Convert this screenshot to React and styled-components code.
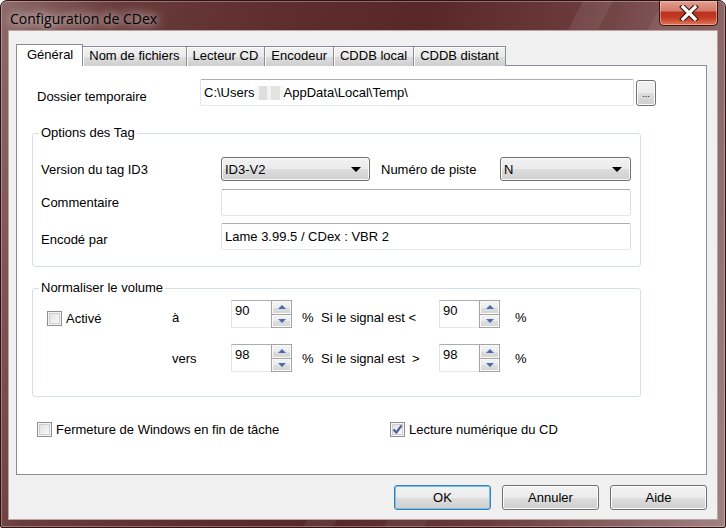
import React from 'react'
import styled, { createGlobalStyle, css } from 'styled-components'

const GlobalStyle = createGlobalStyle`
  html, body {
    margin: 0;
    padding: 0;
    background: #ffffff;
  }
  body {
    font-family: "Liberation Sans", Arial, sans-serif;
    font-size: 13px;
    color: #000;
  }
  * { box-sizing: border-box; }
`

const Window = styled.div`
  width: 726px;
  height: 528px;
  display: flex;
  flex-direction: column;
  border: 1px solid #2c1414;
  border-radius: 7px 7px 2px 2px;
  box-shadow: inset 0 0 0 1px rgba(255, 220, 220, 0.35);
  background:
    linear-gradient(118deg, transparent 0 58%, rgba(255,255,255,0.07) 58% 61%, transparent 61% 66%, rgba(255,255,255,0.06) 66% 70%, transparent 70%),
    linear-gradient(100deg, #8e6a6a 0%, #6a3c3c 14%, #5e2d2d 35%, #582828 52%, #6a3a3a 70%, #8a6464 88%, #a08282 100%);
  overflow: hidden;
`

const TitleBar = styled.div`
  height: 29px;
  display: flex;
  align-items: flex-start;
  justify-content: space-between;
  padding-left: 9px;
`

const Title = styled.div`
  font-family: "Open Sans", "Noto Sans", sans-serif;
  font-size: 14px;
  line-height: 20px;
  margin-top: 8px;
  color: #000;
  text-shadow: 0 0 8px rgba(255,255,255,0.9), 0 0 14px rgba(255,255,255,0.7);
`

const CloseButton = styled.div`
  width: 59px;
  height: 25px;
  margin-right: 7px;
  border: 1px solid #3b1410;
  border-top: none;
  border-radius: 0 0 5px 5px;
  background: linear-gradient(180deg, #e2a293 0%, #d57a68 40%, #b8321f 48%, #c43a23 70%, #e0785a 100%);
  box-shadow: inset 0 0 0 1px rgba(255,210,200,0.5);
  display: flex;
  align-items: center;
  justify-content: center;
`

const Client = styled.div`
  flex: 1;
  margin: 0 7px 7px 7px;
  background: #f0f0f0;
  border: 1px solid #b9a3a3;
  display: flex;
  flex-direction: column;
  padding: 13px 10px 0 7px;
`

const TabStrip = styled.div`
  display: flex;
  align-items: flex-end;
  height: 22px;
  margin-bottom: -1px;
  position: relative;
  z-index: 1;
`

const Tab = styled.div`
  height: 20px;
  padding: 0 6px;
  line-height: 18px;
  border: 1px solid #898c95;
  border-bottom: none;
  border-left-width: 0;
  background: linear-gradient(180deg, #f2f2f2 0%, #ebebeb 50%, #dddddd 51%, #cfcfcf 100%);
  box-shadow: inset 1px 1px 0 #fcfcfc;
  white-space: nowrap;
  ${p => p.$active && css`
    height: 22px;
    padding: 0 9px 0 10px;
    line-height: 20px;
    border-left-width: 1px;
    background: #ffffff;
    box-shadow: none;
  `}
`

const Panel = styled.div`
  flex: 1;
  background: #ffffff;
  border: 1px solid #898c95;
  padding-top: 13px;
`

const Row = styled.div`
  display: flex;
  align-items: center;
  margin-left: ${p => p.$indent || 0}px;
  margin-top: ${p => p.$top || 0}px;
`

const Label = styled.span`
  display: inline-block;
  width: ${p => p.$w ? p.$w + 'px' : 'auto'};
  margin-left: ${p => p.$ml || 0}px;
  white-space: pre;
  padding-top: ${p => p.$pt || 0}px;
`

const TextBox = styled.div`
  width: ${p => p.$w}px;
  height: ${p => p.$h || 27}px;
  border: 1px solid;
  border-color: #abadb3 #dbdfe6 #e3e9ef #e2e3ea;
  border-radius: 2px;
  background: #fff;
  padding: 0 3px;
  display: flex;
  align-items: center;
  white-space: nowrap;
`

const Blur = styled.span`
  display: inline-block;
  width: 29px;
  height: 14px;
  background: linear-gradient(90deg, #f6f6f6 0 14%, #dedede 14% 40%, #f3f3f3 40% 56%, #e3e3e3 56% 86%, #f6f6f6 86%);
`

const SmallButton = styled.div`
  width: 20px;
  height: 26px;
  margin-left: 2px;
  border: 1px solid #707070;
  border-radius: 3px;
  background: linear-gradient(180deg, #f2f2f2 0%, #ebebeb 50%, #dddddd 51%, #cfcfcf 100%);
  box-shadow: inset 0 0 0 1px #fcfcfc;
  font-size: 9px;
  display: flex;
  align-items: flex-end;
  justify-content: center;
  padding-bottom: 6px;
`

const Group = styled.fieldset`
  margin: ${p => p.$top}px 0 0 15px;
  width: 609px;
  border: 1px solid #d5dfe5;
  border-radius: 3px;
  padding: ${p => p.$pad};
  min-width: 0;
`

const Legend = styled.legend`
  padding: 0 2px;
  margin-left: -2px;
  line-height: 16px;
`

const Select = styled.div`
  width: ${p => p.$w}px;
  height: 24px;
  border: 1px solid #707070;
  border-radius: 3px;
  background: linear-gradient(180deg, #f2f2f2 0%, #ebebeb 50%, #dddddd 51%, #cfcfcf 100%);
  box-shadow: inset 0 0 0 1px #fbfbfb;
  display: flex;
  align-items: center;
  justify-content: space-between;
  padding: 0 8px 0 3px;
`

const Arrow = styled.span`
  width: 0;
  height: 0;
  border-left: 5px solid transparent;
  border-right: 5px solid transparent;
  border-top: 5px solid #000;
`

const SpinGrid = styled.div`
  display: grid;
  grid-template-columns: 125px 59px 61px 29px 118px 61px auto;
  grid-auto-rows: 28px;
  row-gap: 16px;
  align-items: center;
  margin-left: 6px;
`

const Spinner = styled.div`
  display: flex;
  width: 61px;
  height: 28px;
`

const SpinText = styled.div`
  flex: 1;
  border: 1px solid;
  border-color: #abadb3 #dbdfe6 #e3e9ef #e2e3ea;
  border-right: none;
  background: #fff;
  padding: 2px 0 0 3px;
  line-height: 15px;
`

const SpinButtons = styled.div`
  width: 21px;
  border: 1px solid #a4a4a4;
  display: flex;
  flex-direction: column;
  gap: 1px;
  background: #a4a4a4;
`

const SpinButton = styled.div`
  flex: 1;
  background: linear-gradient(180deg, #f4f4f4 0%, #ebebeb 50%, #dedede 51%, #d4d4d4 100%);
  box-shadow: inset 0 0 0 1px #fafafa;
  display: flex;
  align-items: center;
  justify-content: center;
`

const Tri = styled.span`
  width: 0;
  height: 0;
  border-left: 4px solid transparent;
  border-right: 4px solid transparent;
  ${p => p.$up
    ? css`border-bottom: 4px solid #4d6ba8;`
    : css`border-top: 4px solid #4d6ba8;`}
`

const Check = styled.div`
  display: flex;
  align-items: center;
  gap: 4px;
  width: ${p => p.$w ? p.$w + 'px' : 'auto'};
  margin-top: ${p => p.$top || 0}px;
`

const Box = styled.span`
  width: 15px;
  height: 15px;
  border: 1px solid #8f8f8f;
  background: linear-gradient(135deg, #dcdcdc 0%, #f4f4f4 70%, #ffffff 100%);
  box-shadow: inset 0 0 0 1px #f4f4f4, inset 0 0 0 2px #cfcfcf;
  display: flex;
  align-items: center;
  justify-content: center;
  flex: none;
`

const Footer = styled.div`
  display: flex;
  justify-content: flex-end;
  gap: 11px;
  padding: 10px 0 9px;
`

const Button = styled.div`
  width: 97px;
  height: 25px;
  border: 1px solid ${p => p.$default ? '#3c7fb1' : '#707070'};
  border-radius: 3px;
  background: linear-gradient(180deg, #f2f2f2 0%, #ebebeb 50%, #dddddd 51%, #cfcfcf 100%);
  box-shadow: inset 0 0 0 1px ${p => p.$default ? '#6fc3ef' : '#fcfcfc'};
  display: flex;
  align-items: center;
  justify-content: center;
`

const CheckMark = () => (
  <svg width="11" height="11" viewBox="0 0 11 11">
    <path d="M1.5 5.5 L4.3 8.6 L9.6 1.4" fill="none" stroke="#4a5f97" strokeWidth="2.2" strokeLinejoin="round" />
  </svg>
)

const CloseX = () => (
  <svg width="20" height="16" viewBox="0 0 20 16">
    <path d="M4 2 L16 14 M16 2 L4 14" stroke="#3a1a14" strokeWidth="5.5" strokeLinecap="square" />
    <path d="M4 2 L16 14 M16 2 L4 14" stroke="#ffffff" strokeWidth="3.2" strokeLinecap="square" />
  </svg>
)

const Spin = ({ value }) => (
  <Spinner>
    <SpinText>{value}</SpinText>
    <SpinButtons>
      <SpinButton><Tri $up /></SpinButton>
      <SpinButton><Tri /></SpinButton>
    </SpinButtons>
  </Spinner>
)

const tabs = ['Général', 'Nom de fichiers', 'Lecteur CD', 'Encodeur', 'CDDB local', 'CDDB distant']

export default function App() {
  return (
    <>
      <GlobalStyle />
      <Window>
        <TitleBar>
          <Title>Configuration de CDex</Title>
          <CloseButton><CloseX /></CloseButton>
        </TitleBar>
        <Client>
          <TabStrip>
            {tabs.map((t, i) => <Tab key={t} $active={i === 0}>{t}</Tab>)}
          </TabStrip>
          <Panel>
            <Row $indent={20}>
              <Label $w={163} $pt={7}>Dossier temporaire</Label>
              <TextBox $w={434}>C:\Users<Blur />AppData\Local\Temp\</TextBox>
              <SmallButton>...</SmallButton>
            </Row>

            <Group $top={19} $pad="16px 8px 16px 8px">
              <Legend>Options des Tag</Legend>
              <Row>
                <Label $w={180} $pt={1}>Version du tag ID3</Label>
                <Select $w={149}>ID3-V2<Arrow /></Select>
                <Label $w={119} $ml={11}>Numéro de piste</Label>
                <Select $w={131}>N<Arrow /></Select>
              </Row>
              <Row $top={8}>
                <Label $w={180}>Commentaire</Label>
                <TextBox $w={410} />
              </Row>
              <Row $top={7}>
                <Label $w={180} $pt={5}>Encodé par</Label>
                <TextBox $w={410}>Lame 3.99.5 / CDex : VBR 2</TextBox>
              </Row>
            </Group>

            <Group $top={13} $pad="4px 8px 24px 8px">
              <Legend>Normaliser le volume</Legend>
              <SpinGrid>
                <Check $top={8}><Box />Activé</Check>
                <Label $pt={6}>à</Label>
                <Spin value="90" />
                <Label $ml={10} $pt={6}>%</Label>
                <Label $pt={6}>Si le signal est {'<'}</Label>
                <Spin value="90" />
                <Label $ml={15} $pt={6}>%</Label>

                <span />
                <Label $pt={1}>vers</Label>
                <Spin value="98" />
                <Label $ml={10} $pt={1}>%</Label>
                <Label $pt={1}>Si le signal est  {'>'}</Label>
                <Spin value="98" />
                <Label $ml={15} $pt={1}>%</Label>
              </SpinGrid>
            </Group>

            <Row $indent={20} $top={25}>
              <Check $w={353}><Box />Fermeture de Windows en fin de tâche</Check>
              <Check><Box><CheckMark /></Box>Lecture numérique du CD</Check>
            </Row>
          </Panel>
          <Footer>
            <Button $default>OK</Button>
            <Button>Annuler</Button>
            <Button>Aide</Button>
          </Footer>
        </Client>
      </Window>
    </>
  )
}
